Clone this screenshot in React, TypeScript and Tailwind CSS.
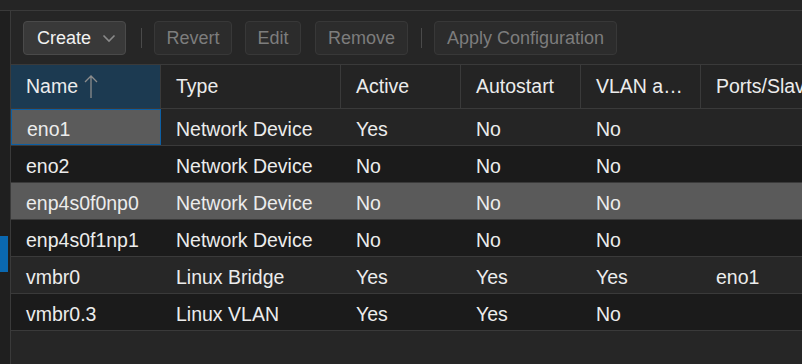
import React from 'react';

const columns = [
  { key: 'name', label: 'Name', width: 'w-[150px]' },
  { key: 'type', label: 'Type', width: 'w-[180px]' },
  { key: 'active', label: 'Active', width: 'w-[120px]' },
  { key: 'autostart', label: 'Autostart', width: 'w-[120px]' },
  { key: 'vlan', label: 'VLAN a…', width: 'w-[120px]' },
  { key: 'ports', label: 'Ports/Slaves', width: 'w-[160px]' },
];

const rows = [
  { name: 'eno1', type: 'Network Device', active: 'Yes', autostart: 'No', vlan: 'No', ports: '', bg: 'bg-[#252525]', selected: true },
  { name: 'eno2', type: 'Network Device', active: 'No', autostart: 'No', vlan: 'No', ports: '', bg: 'bg-[#1b1b1b]' },
  { name: 'enp4s0f0np0', type: 'Network Device', active: 'No', autostart: 'No', vlan: 'No', ports: '', bg: 'bg-[#5a5a5a]' },
  { name: 'enp4s0f1np1', type: 'Network Device', active: 'No', autostart: 'No', vlan: 'No', ports: '', bg: 'bg-[#1b1b1b]' },
  { name: 'vmbr0', type: 'Linux Bridge', active: 'Yes', autostart: 'Yes', vlan: 'Yes', ports: 'eno1', bg: 'bg-[#272727]' },
  { name: 'vmbr0.3', type: 'Linux VLAN', active: 'Yes', autostart: 'Yes', vlan: 'No', ports: '', bg: 'bg-[#1b1b1b]' },
];

function ToolButton({ label, width }: { label: string; width: string }) {
  return (
    <div
      className={`${width} h-[34px] flex items-center justify-center pt-[2px] rounded-[4px] border border-[#383838] bg-[#2c2c2c] text-[18px] text-[#7d7d7d]`}
    >
      {label}
    </div>
  );
}

function Separator() {
  return <div className="w-px h-[20px] bg-[#4a4a4a]" />;
}

export default function App() {
  return (
    <div
      className="w-[802px] h-[364px] overflow-hidden flex flex-col bg-[#262626] text-[#ececec]"
      style={{ fontFamily: '"Liberation Sans", Arial, sans-serif' }}
    >
      {/* top strip */}
      <div className="h-[11px] shrink-0 bg-[#252525] border-b border-[#3a3a3a]" />

      <div className="flex flex-1 min-h-0">
        {/* nav strip */}
        <div className="w-[11px] shrink-0 bg-[#1f1f1f] border-r border-[#3a3a3a] pt-[225px]">
          <div className="w-[8px] h-[36px] bg-[#0a68b0]" />
        </div>

        <div className="flex-1 min-w-0 flex flex-col">
          {/* toolbar */}
          <div className="h-[54px] shrink-0 flex items-center pl-[12px] border-b border-[#3a3a3a] bg-[#262626]">
            <div className="w-[103px] h-[34px] flex items-center pl-[13px] pt-[2px] rounded-[4px] border border-[#4a4a4a] bg-[#393939] text-[18px] text-[#f2f2f2]">
              <span>Create</span>
              <svg className="ml-[11px]" width="14" height="9" viewBox="0 0 14 9" fill="none">
                <path d="M1.5 1.5 L7 7 L12.5 1.5" stroke="#8a8a8a" strokeWidth="1.6" />
              </svg>
            </div>
            <div className="ml-[15px] mr-[12px]">
              <Separator />
            </div>
            <ToolButton label="Revert" width="w-[78px]" />
            <div className="ml-[13px]">
              <ToolButton label="Edit" width="w-[56px]" />
            </div>
            <div className="ml-[14px]">
              <ToolButton label="Remove" width="w-[93px]" />
            </div>
            <div className="ml-[13px] mr-[12px]">
              <Separator />
            </div>
            <ToolButton label="Apply Configuration" width="w-[183px]" />
          </div>

          {/* header */}
          <div className="h-[44px] shrink-0 flex border-b border-[#3a3a3a] bg-[#242424]">
            {columns.map((c, i) => (
              <div
                key={c.key}
                className={`${c.width} shrink-0 flex items-center pl-[15px] text-[19.5px] whitespace-nowrap ${
                  i < columns.length - 1 ? 'border-r border-[#3a3a3a]' : ''
                } ${i === 0 ? 'bg-[#1c3a51]' : ''}`}
              >
                <span>{c.label}</span>
                {i === 0 && (
                  <svg className="ml-[6px]" width="14" height="24" viewBox="0 0 14 24" fill="none">
                    <path d="M7 1 V23 M1 7 L7 1 L13 7" stroke="#8c8c8c" strokeWidth="1.3" />
                  </svg>
                )}
              </div>
            ))}
          </div>

          {/* rows */}
          <div className="flex flex-col">
            {rows.map((r) => (
              <div key={r.name} className={`h-[37px] flex border-b border-[#3a3a3a] ${r.bg}`}>
                {columns.map((c, i) => (
                  <div
                    key={c.key}
                    className={`${c.width} shrink-0 flex items-center pl-[15px] pt-[6px] text-[19.5px] whitespace-nowrap ${
                      i === 0 && r.selected ? 'bg-[#5b5b5b] border border-[#0d5fa3] pl-[14px] pt-[4px]' : ''
                    }`}
                  >
                    {(r as Record<string, unknown>)[c.key] as string}
                  </div>
                ))}
              </div>
            ))}
          </div>
        </div>
      </div>
    </div>
  );
}
